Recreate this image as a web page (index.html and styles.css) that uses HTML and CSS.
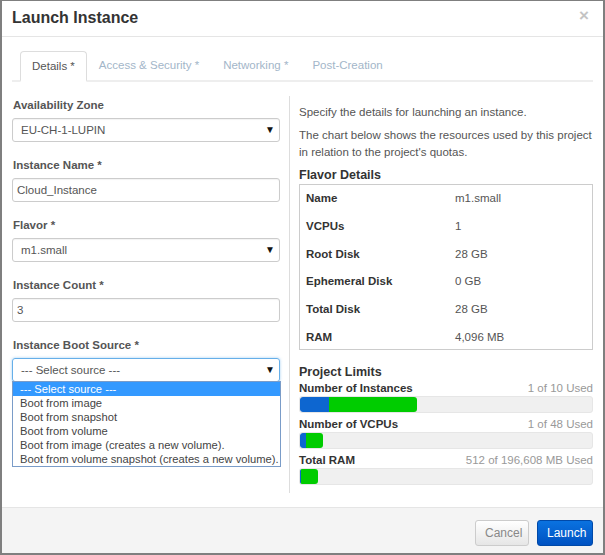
FILE: index.html
```html
<!DOCTYPE html>
<html lang="en">
<head>
    <meta charset="UTF-8">
    <meta name="viewport" content="width=device-width, initial-scale=1.0">
    <title>Launch Instance</title>
    <link rel="stylesheet" href="styles.css">
</head>
<body>
    <div class="modal">
        <div class="modal-header">
            <h3>Launch Instance</h3>
            <span class="close">&times;</span>
        </div>

        <ul class="tabs">
            <li class="tab active">Details *</li>
            <li class="tab">Access &amp; Security *</li>
            <li class="tab">Networking *</li>
            <li class="tab">Post-Creation</li>
        </ul>

        <div class="modal-body">
            <div class="col-left">
                <div class="form-group">
                    <label>Availability Zone</label>
                    <div class="select">EU-CH-1-LUPIN<span class="caret">&#9660;</span></div>
                </div>
                <div class="form-group">
                    <label>Instance Name *</label>
                    <div class="input">Cloud_Instance</div>
                </div>
                <div class="form-group">
                    <label>Flavor *</label>
                    <div class="select">m1.small<span class="caret">&#9660;</span></div>
                </div>
                <div class="form-group">
                    <label>Instance Count *</label>
                    <div class="input">3</div>
                </div>
                <div class="form-group dropdown-group">
                    <label>Instance Boot Source *</label>
                    <div class="select focused">--- Select source ---<span class="caret">&#9660;</span></div>
                    <ul class="options">
                        <li class="selected">--- Select source ---</li>
                        <li>Boot from image</li>
                        <li>Boot from snapshot</li>
                        <li>Boot from volume</li>
                        <li>Boot from image (creates a new volume).</li>
                        <li>Boot from volume snapshot (creates a new volume).</li>
                    </ul>
                </div>
            </div>

            <div class="col-right">
                <p class="first">Specify the details for launching an instance.</p>
                <p>The chart below shows the resources used by this project in relation to the project's quotas.</p>

                <h4>Flavor Details</h4>
                <div class="flavor-table">
                    <div class="row"><span class="key">Name</span><span>m1.small</span></div>
                    <div class="row"><span class="key">VCPUs</span><span>1</span></div>
                    <div class="row"><span class="key">Root Disk</span><span>28 GB</span></div>
                    <div class="row"><span class="key">Ephemeral Disk</span><span>0 GB</span></div>
                    <div class="row"><span class="key">Total Disk</span><span>28 GB</span></div>
                    <div class="row"><span class="key">RAM</span><span>4,096 MB</span></div>
                </div>

                <h4 class="limits-title">Project Limits</h4>
                <div class="limit">
                    <div class="limit-head"><strong>Number of Instances</strong><span>1 of 10 Used</span></div>
                    <div class="bar">
                        <div class="used" style="width: 29px;"></div>
                        <div class="added" style="width: 88px;"></div>
                    </div>
                </div>
                <div class="limit">
                    <div class="limit-head"><strong>Number of VCPUs</strong><span>1 of 48 Used</span></div>
                    <div class="bar">
                        <div class="used" style="width: 6px;"></div>
                        <div class="added" style="width: 17px;"></div>
                    </div>
                </div>
                <div class="limit">
                    <div class="limit-head"><strong>Total RAM</strong><span>512 of 196,608 MB Used</span></div>
                    <div class="bar">
                        <div class="used" style="width: 1px;"></div>
                        <div class="added" style="width: 17px;"></div>
                    </div>
                </div>
            </div>
        </div>

        <div class="modal-footer">
            <button class="btn btn-cancel">Cancel</button>
            <button class="btn btn-launch">Launch</button>
        </div>
    </div>
</body>
</html>
```

FILE: styles.css
```css
body {
    margin: 0;
    padding: 0;
    background-color: #7f7f7f;
    font-family: 'Liberation Sans', Arial, sans-serif;
    font-size: 11.5px;
    color: #555;
}

.modal {
    width: 605px;
    height: 555px;
    box-sizing: border-box;
    border-style: solid;
    border-color: #7f7f7f;
    border-width: 1px 2px 2px 2px;
    background-color: #fff;
    display: flex;
    flex-direction: column;
}

/* header */
.modal-header {
    flex-shrink: 0;
    height: 36px;
    box-sizing: border-box;
    padding: 0 10px;
    border-bottom: 1px solid #e5e5e5;
    display: flex;
    justify-content: space-between;
}

.modal-header h3 {
    margin: 0;
    font-size: 16px;
    line-height: 33px;
    color: #333;
}

.close {
    font-size: 17px;
    line-height: 30px;
    color: #c4c4c4;
    font-weight: bold;
    margin-right: 4px;
}

/* tabs */
.tabs {
    flex-shrink: 0;
    list-style: none;
    margin: 14px 10px 0;
    padding: 0 0 0 8px;
    display: flex;
    align-items: flex-end;
    border-bottom: 2px solid #eee;
}

.tab {
    height: 29px;
    line-height: 29px;
    padding: 0 12px;
    color: #a3b6c9;
    box-sizing: border-box;
}

.tab.active {
    color: #555;
    border: 1px solid #ddd;
    border-bottom: 2px solid #fff;
    border-radius: 4px 4px 0 0;
    padding: 0 11px;
    height: 31px;
    line-height: 28px;
    margin-bottom: -2px;
    background-color: #fff;
}

/* body */
.modal-body {
    flex: 1;
    min-height: 0;
    display: flex;
    padding: 14px 10px 14px;
}

.col-left {
    width: 268px;
    padding: 2px 9px 0 0;
    border-right: 1px solid #ddd;
}

.col-right {
    flex: 1;
    padding: 8px 0 10px 9px;
}

.form-group {
    margin-bottom: 16px;
}

label {
    display: block;
    font-weight: bold;
    line-height: 14px;
    margin-bottom: 6px;
    padding-left: 1px;
    color: #555;
}

.select,
.input {
    height: 24px;
    line-height: 22px;
    box-sizing: border-box;
    border: 1px solid #ccc;
    border-radius: 3px;
    box-shadow: inset 0 1px 1px rgba(0, 0, 0, 0.05);
    color: #555;
}

.select {
    padding: 0 8px;
    position: relative;
}

.input {
    padding: 0 4px;
}

.caret {
    position: absolute;
    right: 4px;
    top: 0;
    font-size: 10px;
    color: #111;
}

.select.focused {
    border-color: #66afe9;
    box-shadow: 0 0 3px rgba(102, 175, 233, 0.6);
}

.dropdown-group {
    position: relative;
}

.options {
    position: absolute;
    left: 0;
    top: 43px;
    width: 269px;
    margin: 0;
    padding: 0;
    list-style: none;
    background-color: #fff;
    border: 1px solid #7a9cc8;
    box-sizing: border-box;
}

.options li {
    height: 14px;
    line-height: 14px;
    padding-left: 7px;
    font-size: 11.2px;
    color: #444;
    white-space: nowrap;
}

.options li.selected {
    background-color: #3399ff;
    color: #fff;
}

/* right column */
.col-right p {
    margin: 6px 0 0;
    line-height: 17px;
    color: #555;
}

.col-right p.first {
    margin-top: 0;
}

h4 {
    margin: 6px 0 1px;
    font-size: 12.5px;
    line-height: 16px;
    color: #333;
}

.flavor-table {
    border: 1px solid #ccc;
    height: 166px;
    box-sizing: border-box;
    overflow: hidden;
}

.row {
    display: grid;
    grid-template-columns: 149px 1fr;
    height: 27.8px;
    line-height: 26px;
    padding-left: 6px;
    color: #555;
}

.key {
    font-weight: bold;
    color: #333;
}

.limits-title {
    margin-top: 14px;
}

.limit {
    margin-bottom: 4px;
}

.limit-head {
    display: flex;
    justify-content: space-between;
    line-height: 14px;
    margin-bottom: 1px;
}

.limit-head strong {
    color: #333;
}

.limit-head span {
    color: #999;
}

.bar {
    height: 17px;
    box-sizing: border-box;
    background-color: #f0f0f0;
    border: 1px solid #e6e6e6;
    border-radius: 3px;
    display: flex;
    overflow: hidden;
}

.used {
    background-color: #0d66d0;
    height: 100%;
    border-radius: 3px 0 0 3px;
}

.added {
    background-color: #00cc00;
    height: 100%;
    border-radius: 0 3px 3px 0;
}

/* footer */
.modal-footer {
    flex-shrink: 0;
    height: 46px;
    box-sizing: border-box;
    border-top: 1px solid #e5e5e5;
    background-color: #f4f4f4;
    padding: 12px 10px 0 0;
    display: flex;
    justify-content: flex-end;
    align-items: flex-start;
    gap: 8px;
}

.btn {
    height: 26px;
    font-family: 'Liberation Sans', Arial, sans-serif;
    font-size: 12px;
    border-radius: 3px;
    padding: 0 9px;
    cursor: pointer;
}

.btn-cancel {
    background: linear-gradient(#ffffff, #e6e6e6);
    border: 1px solid #ccc;
    color: #888;
    width: 54px;
}

.btn-cancel:hover {
    background: #e6e6e6;
}

.btn-launch {
    background: linear-gradient(#0a72e0, #0052c2);
    border: 1px solid #0049a8;
    color: #fff;
    width: 56px;
}

.btn-launch:hover {
    background: #0052c2;
}
```
